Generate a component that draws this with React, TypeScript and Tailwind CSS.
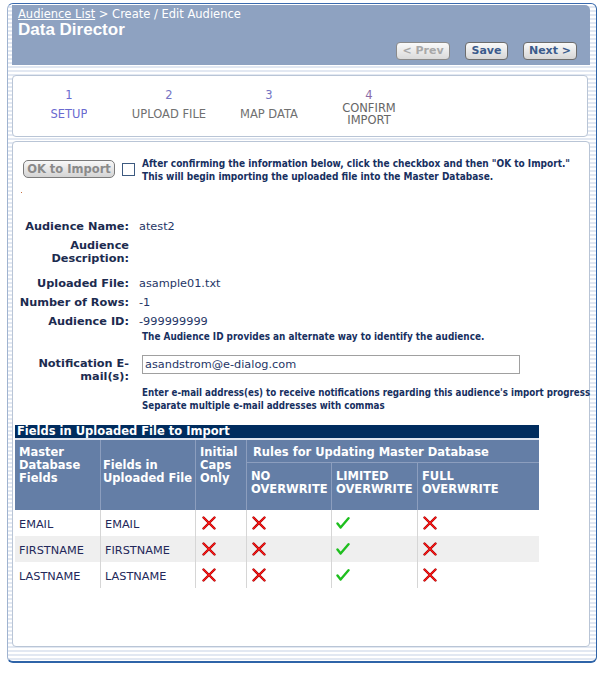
import React from "react";

const XIcon = () => (
  <svg width="14" height="14" viewBox="0 0 14 14" className="block">
    <path d="M1.5 1.5 L12.5 12.5 M12.5 1.5 L1.5 12.5" stroke="#a00000" strokeWidth="2.4" strokeLinecap="round" fill="none" />
    <path d="M1.5 1.5 L12.5 12.5 M12.5 1.5 L1.5 12.5" stroke="#ff1818" strokeWidth="1.1" strokeLinecap="round" fill="none" />
  </svg>
);

const CheckIcon = () => (
  <svg width="14" height="14" viewBox="0 0 14 14" className="block">
    <path d="M1.5 7.5 L4.6 11.5 L12.5 2.2" stroke="#1fbf1f" strokeWidth="2.4" strokeLinecap="round" strokeLinejoin="round" fill="none" />
  </svg>
);

const noteFont = "font-['DejaVu_Sans_Condensed','Liberation_Sans',sans-serif] font-bold text-[#17305f]";
const note = `${noteFont} text-[10px]`;
const label = "w-[116px] shrink-0 text-right font-bold text-[#1c2b4f]";

const rows = [
  { a: "EMAIL", b: "EMAIL", bg: "bg-white" },
  { a: "FIRSTNAME", b: "FIRSTNAME", bg: "bg-[#efefef]" },
  { a: "LASTNAME", b: "LASTNAME", bg: "bg-white" },
];

export default function App() {
  return (
    <div className="w-[598px] h-[700px] bg-white font-['DejaVu_Sans',sans-serif] pt-[3px] pl-[7px]">
      <div className="w-[590px] h-[660px] rounded-[6px] border border-t-[#3a6aae] border-r-[#2f64a8] border-b-2 border-b-[#2f64a8] border-l-[#9fb3d0] bg-[repeating-linear-gradient(to_bottom,#ffffff_0px,#ffffff_2px,#e2e8f2_2px,#e2e8f2_4px)] pl-[4px] pt-[1px]">
        {/* Header */}
        <div className="w-[578px] h-[60px] bg-[#8ea2c1] rounded-tr-[5px] px-[6px] pt-[2px]">
          <div className="text-[11.5px] leading-[14px] text-white whitespace-nowrap">
            <span className="underline">Audience List</span> &gt; Create / Edit Audience
          </div>
          <div className="font-['Liberation_Sans',sans-serif] font-bold text-[17px] leading-[18px] text-white">
            Data Director
          </div>
          <div className="flex justify-end gap-[15px] pr-[7px] mt-[3px]">
            <div className="w-[54px] h-[18px] rounded-[4px] border border-[#8a8a8a] bg-linear-to-b from-[#fafafa] to-[#dadada] text-[11px] font-bold leading-[16px] text-[#a8a8a8] text-center">&lt; Prev</div>
            <div className="w-[43px] h-[18px] rounded-[4px] border border-[#6d6d6d] bg-linear-to-b from-[#fafafa] to-[#d6d6d6] text-[11px] font-bold leading-[16px] text-[#3b5b8c] text-center">Save</div>
            <div className="w-[54px] h-[18px] rounded-[4px] border border-[#6d6d6d] bg-linear-to-b from-[#fafafa] to-[#d6d6d6] text-[11px] font-bold leading-[16px] text-[#3b5b8c] text-center">Next &gt;</div>
          </div>
        </div>

        {/* Stepper */}
        <div className="mt-[10px] w-[576px] h-[62px] bg-white border border-[#b9c5d6] rounded-[4px] pl-[6px] pt-[13px] flex text-[11.5px]">
          <div className="w-[100px] flex flex-col items-center">
            <div className="leading-[12px] text-[#6a6ad0]">1</div>
            <div className="mt-[1px] h-[22px] overflow-hidden leading-[12px] pt-[6px] text-[#6a6ad0]">SETUP</div>
          </div>
          <div className="w-[100px] flex flex-col items-center">
            <div className="leading-[12px] text-[#7474c4]">2</div>
            <div className="mt-[1px] h-[22px] overflow-hidden leading-[12px] pt-[6px] text-[#707070]">UPLOAD FILE</div>
          </div>
          <div className="w-[100px] flex flex-col items-center">
            <div className="leading-[12px] text-[#7474c4]">3</div>
            <div className="mt-[1px] h-[22px] overflow-hidden leading-[12px] pt-[6px] text-[#707070]">MAP DATA</div>
          </div>
          <div className="w-[100px] flex flex-col items-center">
            <div className="leading-[12px] text-[#8a6aa6]">4</div>
            <div className="mt-[1px] h-[22px] overflow-hidden leading-[12px] text-[#666666] text-center">CONFIRM<br />IMPORT</div>
          </div>
        </div>

        {/* Content */}
        <div className="mt-[4px] w-[578px] h-[506px] bg-white border border-[#b9c5d6] rounded-[4px] pt-[16px]">
          <div className="flex items-start pl-[10px]">
            <div className="mt-[2px] w-[92px] h-[18px] shrink-0 rounded-[5px] border border-[#7a7a7a] bg-linear-to-b from-[#f8f8f8] to-[#d4d4d4] text-[11.5px] font-bold leading-[16px] text-[#8a8a8a] text-center">OK to Import</div>
            <div className="mt-[5px] ml-[7px] w-[13px] h-[13px] shrink-0 border border-[#3d5a80] bg-white"></div>
            <div className={`ml-[7px] leading-[12.5px] ${note}`}>
              After confirming the information below, click the checkbox and then "OK to Import."<br />
              This will begin importing the uploaded file into the Master Database.
            </div>
          </div>
          <div className="ml-[8px] mt-[9px] w-[1px] h-[1px] bg-[#c87040]"></div>

          {/* Form */}
          <div className="mt-[27px] text-[11.3px] leading-[13px]">
            <div className="flex">
              <div className={label}>Audience Name:</div>
              <div className="ml-[10px] text-[#253566]">atest2</div>
            </div>
            <div className="flex mt-[6px]">
              <div className={label}>Audience<br />Description:</div>
              <div className="ml-[10px] text-[#253566]"></div>
            </div>
            <div className="flex mt-[12px]">
              <div className={label}>Uploaded File:</div>
              <div className="ml-[10px] text-[#253566]">asample01.txt</div>
            </div>
            <div className="flex mt-[6px]">
              <div className={label}>Number of Rows:</div>
              <div className="ml-[10px] text-[#253566]">-1</div>
            </div>
            <div className="flex mt-[6px]">
              <div className={label}>Audience ID:</div>
              <div className="ml-[10px]">
                <div className="text-[#253566]">-999999999</div>
                <div className={`mt-[3px] pl-[3px] leading-[12px] whitespace-nowrap ${noteFont} text-[9.9px]`}>The Audience ID provides an alternate way to identify the audience.</div>
              </div>
            </div>
            <div className="flex mt-[12px]">
              <div className={`${label} mt-[2px]`}>Notification E-<br />mail(s):</div>
              <div className="ml-[10px] pl-[3px]">
                <div className="w-[378px] h-[19px] border border-[#a0a0a0] pl-[2px] text-[11.3px] leading-[17px] text-[#253566]">asandstrom@e-dialog.com</div>
                <div className={`mt-[13px] leading-[12.5px] whitespace-nowrap ${noteFont} text-[9.7px]`}>
                  Enter e-mail address(es) to receive notifications regarding this audience's import progress<br />
                  Separate multiple e-mail addresses with commas
                </div>
              </div>
            </div>
          </div>

          {/* Table */}
          <div className="ml-[2px] mt-[13px] w-[524px] text-[11.5px]">
            <div className="h-[13px] bg-[#002c5e] text-white font-bold leading-[13px] pl-[2px] whitespace-nowrap">Fields in Uploaded File to Import</div>
            <div className="h-[2px] bg-[#dde3ee]"></div>
            <div className="flex h-[70px] bg-[#647ea6] text-white font-bold whitespace-nowrap">
              <div className="w-[86px] pl-[4px] pt-[6px] leading-[13px] border-r border-[#8c9ebe]">Master<br />Database<br />Fields</div>
              <div className="w-[95px] pl-[2px] pt-[19px] leading-[13px] border-r border-[#8c9ebe]">Fields in<br />Uploaded File</div>
              <div className="w-[51px] pl-[4px] pt-[6px] leading-[13px] border-r border-[#8c9ebe]">Initial<br />Caps<br />Only</div>
              <div className="flex-1 flex flex-col">
                <div className="h-[23px] pl-[6px] pt-[6px] leading-[13px] border-b border-[#8c9ebe]">Rules for Updating Master Database</div>
                <div className="flex flex-1">
                  <div className="w-[85px] pl-[4px] pt-[7px] leading-[12.5px] border-r border-[#8c9ebe]">NO<br />OVERWRITE</div>
                  <div className="w-[86px] pl-[4px] pt-[7px] leading-[12.5px] border-r border-[#8c9ebe]">LIMITED<br />OVERWRITE</div>
                  <div className="flex-1 pl-[4px] pt-[7px] leading-[12.5px]">FULL<br />OVERWRITE</div>
                </div>
              </div>
            </div>
            {rows.map((r) => (
              <div key={r.a} className={`flex h-[26px] ${r.bg} text-[11.3px] text-[#23285a]`}>
                <div className="w-[86px] pl-[4px] pt-[8px] leading-[13px] border-r border-[#d6d6d6]">{r.a}</div>
                <div className="w-[95px] pl-[4px] pt-[8px] leading-[13px] border-r border-[#d6d6d6]">{r.b}</div>
                <div className="w-[51px] pl-[6px] pt-[6px] border-r border-[#d6d6d6]"><XIcon /></div>
                <div className="w-[85px] pl-[5px] pt-[6px] border-r border-[#d6d6d6]"><XIcon /></div>
                <div className="w-[86px] pl-[4px] pt-[6px] border-r border-[#d6d6d6]"><CheckIcon /></div>
                <div className="flex-1 pl-[5px] pt-[6px]"><XIcon /></div>
              </div>
            ))}
          </div>
        </div>
      </div>
    </div>
  );
}
